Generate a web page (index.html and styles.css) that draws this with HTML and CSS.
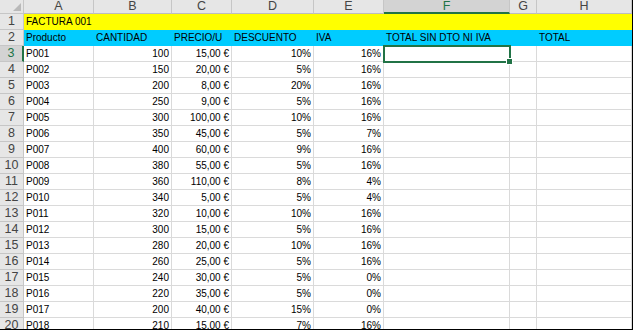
FILE: index.html
```html
<!DOCTYPE html>
<html lang="es">
<head>
    <meta charset="UTF-8">
    <title>Factura 001</title>
    <link rel="stylesheet" href="styles.css">
</head>
<body>
    <div class="frame">
        <div class="sheet" id="sheet">
            <div class="corner"></div>
            <div class="col-head">A</div>
            <div class="col-head">B</div>
            <div class="col-head">C</div>
            <div class="col-head">D</div>
            <div class="col-head">E</div>
            <div class="col-head active">F</div>
            <div class="col-head">G</div>
            <div class="col-head">H</div>

            <div class="row-head">1</div>
            <div class="cell title">FACTURA 001</div>

            <div class="row-head">2</div>
            <div class="cell label">Producto</div>
            <div class="cell label">CANTIDAD</div>
            <div class="cell label">PRECIO/U</div>
            <div class="cell label">DESCUENTO</div>
            <div class="cell label">IVA</div>
            <div class="cell label">TOTAL SIN DTO NI IVA</div>
            <div class="cell label"></div>
            <div class="cell label">TOTAL</div>
        </div>
    </div>

    <script>
        const rows = [
            ['P001', 100, '15,00 €', '10%', '16%'],
            ['P002', 150, '20,00 €', '5%', '16%'],
            ['P003', 200, '8,00 €', '20%', '16%'],
            ['P004', 250, '9,00 €', '5%', '16%'],
            ['P005', 300, '100,00 €', '10%', '16%'],
            ['P006', 350, '45,00 €', '5%', '7%'],
            ['P007', 400, '60,00 €', '9%', '16%'],
            ['P008', 380, '55,00 €', '5%', '16%'],
            ['P009', 360, '110,00 €', '8%', '4%'],
            ['P010', 340, '5,00 €', '5%', '4%'],
            ['P011', 320, '10,00 €', '10%', '16%'],
            ['P012', 300, '15,00 €', '5%', '16%'],
            ['P013', 280, '20,00 €', '10%', '16%'],
            ['P014', 260, '25,00 €', '5%', '16%'],
            ['P015', 240, '30,00 €', '5%', '0%'],
            ['P016', 220, '35,00 €', '5%', '0%'],
            ['P017', 200, '40,00 €', '15%', '0%'],
            ['P018', 210, '15,00 €', '7%', '16%']
        ];

        const sheet = document.getElementById('sheet');

        rows.forEach((row, i) => {
            const rowNum = i + 3;
            const head = document.createElement('div');
            head.className = rowNum === 3 ? 'row-head active' : 'row-head';
            head.textContent = rowNum;
            sheet.appendChild(head);

            // A..H, empty cells for F, G, H
            const values = row.concat(['', '', '']);
            values.forEach((value, col) => {
                const cell = document.createElement('div');
                cell.className = col === 0 ? 'cell' : 'cell num';
                if (rowNum === 3 && col === 5) {
                    cell.className += ' selected';
                }
                cell.textContent = value;
                sheet.appendChild(cell);
            });
        });
    </script>
</body>
</html>
```

FILE: styles.css
```css
body {
    margin: 0;
    background: #fff;
    font-family: "Liberation Sans", Arial, sans-serif;
}

.frame {
    width: 633px;
    height: 330px;
    box-sizing: border-box;
    border-right: 1px solid #000;
    border-bottom: 1px solid #000;
    overflow: hidden;
}

.sheet {
    display: grid;
    grid-template-columns: 24px 70px 78px 60px 82px 70px 126px 27px 95px;
    grid-template-rows: 14px;
    grid-auto-rows: 16px;
}

/* headers */
.corner,
.col-head,
.row-head {
    box-sizing: border-box;
    background: #e6e6e6;
    border-right: 1px solid #c6c6c6;
    border-bottom: 1px solid #c6c6c6;
    color: #444;
    font-size: 12.5px;
    text-align: center;
}

.corner {
    position: relative;
}

.corner::after {
    content: "";
    position: absolute;
    right: 2px;
    bottom: 2px;
    border-left: 8px solid transparent;
    border-bottom: 8px solid #b9b9b9;
}

.col-head {
    line-height: 13px;
    border-bottom-color: #bdbdbd;
}

.row-head {
    line-height: 15px;
}

.col-head.active {
    background: #d3d3d3;
    color: #217346;
    border-bottom: 2px solid #217346;
}

.row-head.active {
    background: #d3d3d3;
    color: #217346;
    border-right: 2px solid #217346;
}

/* cells */
.cell {
    box-sizing: border-box;
    border-right: 1px solid #dadada;
    border-bottom: 1px solid #dadada;
    padding: 0 2px;
    font-size: 10px;
    line-height: 16px;
    color: #000;
    white-space: nowrap;
}

.num {
    text-align: right;
}

.title {
    grid-column: span 8;
    background: #ffff00;
    border-color: #ffff00;
}

.label {
    background: #00ccff;
    border-color: #00ccff;
}

.selected {
    position: relative;
    outline: 2px solid #217346;
    outline-offset: -1px;
}

.selected::after {
    content: "";
    position: absolute;
    right: -4px;
    bottom: -4px;
    width: 5px;
    height: 5px;
    background: #217346;
    border: 1px solid #fff;
    z-index: 2;
}
```
